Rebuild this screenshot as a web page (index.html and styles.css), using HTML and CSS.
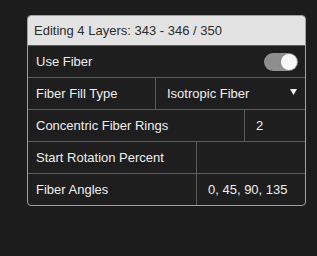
FILE: index.html
```html
<!DOCTYPE html>
<html lang="en">
<head>
    <meta charset="UTF-8">
    <title>Fiber Settings</title>
    <link rel="stylesheet" href="styles.css">
</head>
<body>
    <div class="panel">
        <div class="panel-header">Editing 4 Layers: 343 - 346 / 350</div>

        <div class="row">
            <div class="cell label grow">Use Fiber</div>
            <div class="cell toggle-cell">
                <span class="toggle on"><span class="toggle-knob"></span></span>
            </div>
        </div>

        <div class="row">
            <div class="cell label fill-type">Fiber Fill Type</div>
            <div class="cell value grow select">
                <span>Isotropic Fiber</span>
                <svg class="caret" width="7" height="6" viewBox="0 0 7 6"><path d="M0 0 H7 L3.5 6 Z" fill="#f0f0f0"/></svg>
            </div>
        </div>

        <div class="row">
            <div class="cell label rings">Concentric Fiber Rings</div>
            <div class="cell value grow">2</div>
        </div>

        <div class="row">
            <div class="cell label wide">Start Rotation Percent</div>
            <div class="cell value grow"></div>
        </div>

        <div class="row">
            <div class="cell label wide">Fiber Angles</div>
            <div class="cell value grow">0, 45, 90, 135</div>
        </div>
    </div>
</body>
</html>
```

FILE: styles.css
```css
body {
    margin: 0;
    background-color: #1c1c1c;
    font-family: "Liberation Sans", Arial, sans-serif;
    font-size: 13px;
    color: #efefef;
}

.panel {
    margin: 15px 0 0 27px;
    width: 277px;
    border: 1px solid #a0a0a0;
    border-radius: 4px;
    overflow: hidden;
    background-color: #1e1e1e;
}

.panel-header {
    height: 29px;
    line-height: 29px;
    padding-left: 6px;
    background-color: #e3e3e3;
    color: #2b2b2b;
}

.row {
    display: flex;
    height: 31px;
    border-top: 1px solid #5c5c5c;
}

.cell {
    display: flex;
    align-items: center;
    box-sizing: border-box;
}

.label {
    padding-left: 8px;
    flex-shrink: 0;
}

.value {
    padding-left: 11px;
    border-left: 1px solid #5c5c5c;
}

.grow {
    flex: 1;
}

.fill-type {
    width: 127px;
}

.rings {
    width: 216px;
}

.wide {
    width: 168px;
}

.select {
    justify-content: space-between;
    padding-right: 8px;
}

.caret {
    margin-top: -3px;
}

/* toggle switch */
.toggle-cell {
    padding-right: 7px;
}

.toggle {
    position: relative;
    display: block;
    width: 34px;
    height: 18px;
    border-radius: 9px;
    background-color: #8e8e8e;
}

.toggle-knob {
    position: absolute;
    top: 1px;
    right: 1px;
    width: 16px;
    height: 16px;
    border-radius: 50%;
    background-color: #f7f7f7;
}
```
